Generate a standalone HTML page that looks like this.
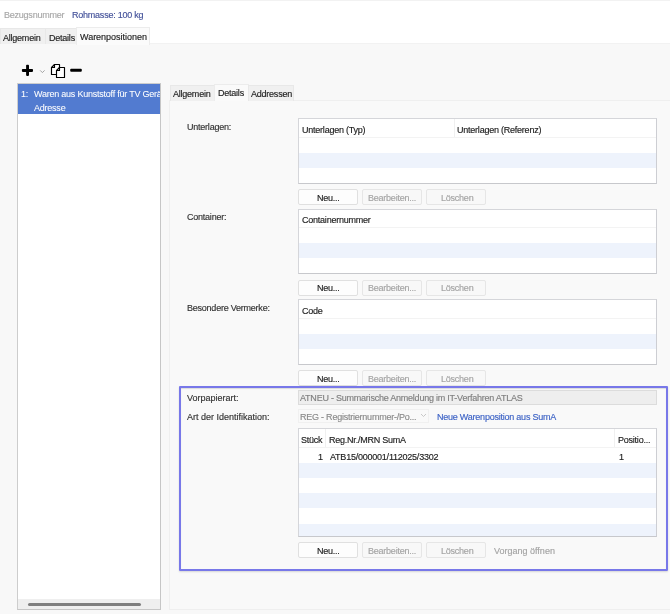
<!DOCTYPE html>
<html><head><meta charset="utf-8">
<style>
*{margin:0;padding:0;box-sizing:border-box}
html,body{width:670px;height:614px;overflow:hidden;background:#f8f8f8}
#w{position:absolute;left:0;top:0;width:670px;height:614px;will-change:transform;font-family:"Liberation Sans",sans-serif;font-size:9px;letter-spacing:-0.23px;color:#222;-webkit-text-stroke:0.15px currentColor}
.a{position:absolute}
.t{position:absolute;white-space:nowrap;line-height:11px}
.tab{position:absolute;background:#f0f0f0;border:1px solid #e8e8e8;border-bottom:none}
.sel{position:absolute;background:#fbfbfb;border:1px solid #ececec;border-bottom:none}
.lbl{color:#333}
.tbl{position:absolute;background:#fff;border:1px solid #d5d6da;border-right-color:#cdced3;border-bottom-color:#c7c8cc}
.hl{position:absolute;height:1px;background:#f3f3f3}
.vl{position:absolute;width:1px;background:#f0f0f0}
.alt{position:absolute;background:#eef3fc}
.btn{position:absolute;height:16px;width:60px;border:1px solid #e0e0e0;border-radius:2px;background:#fdfdfd}
.dis{background:#f8f8f8;border-color:#e6e6e6}
.bt{color:#222}
.bd{color:#a4a4a4}
</style></head><body>
<div id="w">
<!-- header -->
<div class="a" style="left:0;top:0;width:670px;height:43px;background:#fff"></div>
<div class="a" style="left:0;top:0;width:670px;height:1px;background:#f2f2f2"></div>
<div class="a" style="left:0;top:43px;width:670px;height:1px;background:#f2f2f2"></div>
<div class="t" style="left:4px;top:10px;color:#a8a8a8">Bezugsnummer</div>
<div class="t" style="left:72px;top:10px;color:#44529a">Rohmasse: 100 kg</div>

<!-- top tabs -->
<div class="tab" style="left:0;top:28px;width:46px;height:16px"></div>
<div class="tab" style="left:45px;top:28px;width:32px;height:16px"></div>
<div class="sel" style="left:76px;top:27px;width:74px;height:18px"></div>
<div class="t" style="left:3px;top:33px">Allgemein</div>
<div class="t" style="left:49px;top:33px">Details</div>
<div class="t" style="left:80px;top:32px;letter-spacing:-0.02px">Warenpositionen</div>

<!-- toolbar icons -->
<svg class="a" style="left:18px;top:60px" width="70" height="20" viewBox="0 0 70 20">
  <rect x="3.9" y="8.9" width="11.1" height="3" rx="0.8" fill="#000"/>
  <rect x="8.1" y="4.8" width="2.9" height="11.1" rx="0.8" fill="#000"/>
  <path d="M22.2 10.4L24.4 12.6L26.6 10.4" stroke="#999" stroke-width="0.9" fill="none"/>
  <g stroke="#000" stroke-width="1.15" stroke-linejoin="round" fill="#fff">
    <path d="M33.5 7.5L36.5 4.5H41.5V14.5H33.5Z"/>
    <path d="M36.5 4.5V7.5H33.5" fill="none"/>
    <path d="M38.5 10.5L41.5 7.5H46.5V17.5H38.5Z"/>
    <path d="M41.5 7.5V10.5H38.5" fill="none"/>
  </g>
  <rect x="52.2" y="8.85" width="11.6" height="3" rx="1" fill="#000"/>
</svg>

<!-- left list -->
<div class="a" style="left:17px;top:83px;width:144px;height:527px;background:#fff;border:1px solid #cdcdcd;border-right-color:#c6c6c6;border-bottom-color:#c6c6c6"></div>
<div class="a" style="left:18px;top:84px;width:142px;height:30px;background:#527bd0"></div>
<div class="t" style="left:21px;top:89px;color:#fff;-webkit-text-stroke:0.05px #fff">1:</div>
<div class="t" style="left:34px;top:89px;color:#fff;-webkit-text-stroke:0.05px #fff;width:126px;overflow:hidden">Waren aus Kunststoff für TV Geräte</div>
<div class="t" style="left:34px;top:103px;color:#fff;-webkit-text-stroke:0.05px #fff">Adresse</div>
<div class="a" style="left:18px;top:599px;width:142px;height:10px;background:#efefef"></div>
<div class="a" style="left:28px;top:602.5px;width:113px;height:3px;background:#7f7f7f;border-radius:1.5px"></div>

<!-- right panel -->
<div class="a" style="left:169px;top:100px;width:510px;height:510px;background:#f9f9f9;border:1px solid #efefef"></div>
<div class="tab" style="left:170px;top:85px;width:45px;height:16px"></div>
<div class="sel" style="left:214px;top:84px;width:35px;height:17px;background:#fafafa"></div>
<div class="tab" style="left:248px;top:85px;width:46px;height:16px"></div>
<div class="t" style="left:173px;top:89px">Allgemein</div>
<div class="t" style="left:218px;top:88px">Details</div>
<div class="t" style="left:251px;top:89px">Addressen</div>

<!-- Unterlagen -->
<div class="t lbl" style="left:187px;top:122px">Unterlagen:</div>
<div class="tbl" style="left:298px;top:118px;width:359px;height:66px"></div>
<div class="hl" style="left:299px;top:137px;width:357px"></div>
<div class="vl" style="left:454px;top:119px;height:18px"></div>
<div class="alt" style="left:299px;top:153px;width:357px;height:15px"></div>
<div class="t" style="left:302px;top:125px">Unterlagen (Typ)</div>
<div class="t" style="left:457px;top:125px">Unterlagen (Referenz)</div>
<div class="btn" style="left:298px;top:189px"></div>
<div class="btn dis" style="left:362px;top:189px"></div>
<div class="btn dis" style="left:426px;top:189px"></div>
<div class="t bt" style="left:317px;top:193px">Neu...</div>
<div class="t bd" style="left:368px;top:193px">Bearbeiten...</div>
<div class="t bd" style="left:441px;top:193px">Löschen</div>

<!-- Container -->
<div class="t lbl" style="left:187px;top:212px">Container:</div>
<div class="tbl" style="left:298px;top:209px;width:359px;height:65px"></div>
<div class="hl" style="left:299px;top:227px;width:357px"></div>
<div class="alt" style="left:299px;top:243px;width:357px;height:15px"></div>
<div class="t" style="left:302px;top:215px">Containernummer</div>
<div class="btn" style="left:298px;top:280px"></div>
<div class="btn dis" style="left:362px;top:280px"></div>
<div class="btn dis" style="left:426px;top:280px"></div>
<div class="t bt" style="left:317px;top:283px">Neu...</div>
<div class="t bd" style="left:368px;top:283px">Bearbeiten...</div>
<div class="t bd" style="left:441px;top:283px">Löschen</div>

<!-- Besondere Vermerke -->
<div class="t lbl" style="left:187px;top:303px">Besondere Vermerke:</div>
<div class="tbl" style="left:298px;top:299px;width:359px;height:66px"></div>
<div class="hl" style="left:299px;top:318px;width:357px"></div>
<div class="alt" style="left:299px;top:334px;width:357px;height:15px"></div>
<div class="t" style="left:302px;top:306px">Code</div>
<div class="btn" style="left:298px;top:370px"></div>
<div class="btn dis" style="left:362px;top:370px"></div>
<div class="btn dis" style="left:426px;top:370px"></div>
<div class="t bt" style="left:317px;top:374px">Neu...</div>
<div class="t bd" style="left:368px;top:374px">Bearbeiten...</div>
<div class="t bd" style="left:441px;top:374px">Löschen</div>

<!-- Blue frame -->
<div class="a" style="left:179px;top:386px;width:489px;height:185px;border:2px solid #7878e9;border-radius:1px;box-shadow:inset 0 1px 1px rgba(0,0,0,0.12),0 1px 2px rgba(0,0,0,0.14)"></div>
<div class="t lbl" style="left:187px;top:393px;letter-spacing:0">Vorpapierart:</div>
<div class="a" style="left:298px;top:390px;width:359px;height:15px;background:#eeeeee;border:1px solid #dcdcdc"></div>
<div class="t" style="left:300px;top:393px;color:#7f7f7f">ATNEU - Summarische Anmeldung im IT-Verfahren ATLAS</div>
<div class="t lbl" style="left:187px;top:412px;letter-spacing:0">Art der Identifikation:</div>
<div class="a" style="left:298px;top:409px;width:131px;height:14px;background:#f9f9f9;border:1px solid #f0f0f0"></div>
<div class="t" style="left:300px;top:412px;color:#8a8a8a">REG - Registriernummer-/Po...</div>
<svg class="a" style="left:420px;top:413px" width="7" height="5"><path d="M1 1l2.5 2.5L6 1" stroke="#bbb" stroke-width="0.8" fill="none"/></svg>
<div class="t" style="left:437px;top:412px;color:#3d63c6">Neue Warenposition aus SumA</div>

<div class="tbl" style="left:298px;top:428px;width:359px;height:109px"></div>
<div class="hl" style="left:299px;top:447px;width:357px"></div>
<div class="vl" style="left:325px;top:429px;height:18px"></div>
<div class="vl" style="left:614px;top:429px;height:18px"></div>
<div class="alt" style="left:299px;top:463px;width:357px;height:15px"></div>
<div class="alt" style="left:299px;top:493px;width:357px;height:15px"></div>
<div class="alt" style="left:299px;top:524px;width:357px;height:12px"></div>
<div class="t" style="left:301px;top:435px">Stück</div>
<div class="t" style="left:329px;top:435px">Reg.Nr./MRN SumA</div>
<div class="t" style="left:618px;top:435px">Positio...</div>
<div class="t" style="left:318px;top:452px">1</div>
<div class="t" style="left:330px;top:452px">ATB15/000001/112025/3302</div>
<div class="t" style="left:619px;top:452px">1</div>
<div class="btn" style="left:298px;top:542px"></div>
<div class="btn dis" style="left:362px;top:542px"></div>
<div class="btn dis" style="left:426px;top:542px"></div>
<div class="t bt" style="left:317px;top:546px">Neu...</div>
<div class="t bd" style="left:368px;top:546px">Bearbeiten...</div>
<div class="t bd" style="left:441px;top:546px">Löschen</div>
<div class="t bd" style="left:494px;top:546px;letter-spacing:0">Vorgang öffnen</div>
</div>
</body></html>
